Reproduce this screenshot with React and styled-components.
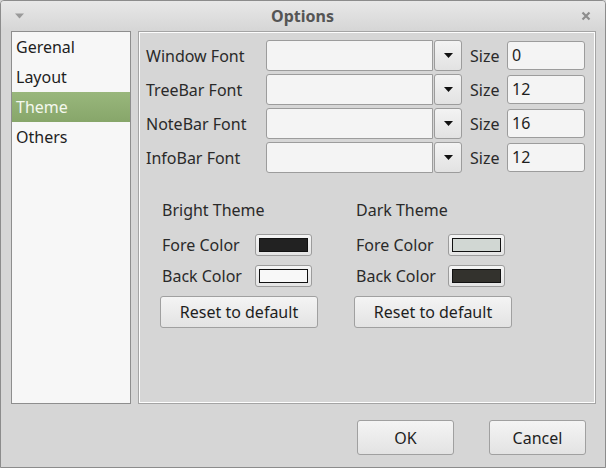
import React from 'react'
import styled, { createGlobalStyle } from 'styled-components'

const GlobalStyle = createGlobalStyle`
  html, body { margin: 0; padding: 0; background: #d6d6d6; }
  body { font-family: "Noto Sans", "Open Sans", sans-serif; font-size: 16px; color: #2a2a2a; }
  * { box-sizing: border-box; }
`

const Window = styled.div`
  width: 606px;
  height: 468px;
  border: 1px solid #8c8c8c;
  border-radius: 4px 4px 0 0;
  background: #d6d6d6;
  display: flex;
  flex-direction: column;
  overflow: hidden;
`

const TitleBar = styled.div`
  height: 29px;
  display: flex;
  align-items: center;
  justify-content: space-between;
  padding: 0 14px 0 14px;
  background: linear-gradient(#e8e8e8, #d6d6d6);
`

const Title = styled.div`
  font-weight: 700;
  font-size: 16px;
  color: #555;
  margin-top: 1px;
`

const Body = styled.div`
  display: flex;
  gap: 7px;
  padding: 1px 9px 0 10px;
  height: 374px;
`

const List = styled.div`
  width: 120px;
  background: #f7f7f7;
  border: 1px solid #8e8e8e;
`

const ListItem = styled.div`
  height: 30px;
  line-height: 30px;
  padding-left: 4px;
  color: ${p => (p.active ? '#f4f8ee' : '#1e1e1e')};
  background: ${p => (p.active ? 'linear-gradient(#99b77c, #87a66a)' : 'transparent')};
`

const Panel = styled.div`
  flex: 1;
  border: 1px solid #a4a4a4;
  box-shadow: inset -1px -1px 0 #fdfdfd, inset 1px 1px 0 #fdfdfd;
  padding: 8px 10px 0 7px;
  height: 373px;
`

const FontGrid = styled.div`
  display: grid;
  grid-template-columns: 120px 167px 29px 45px 78px;
  row-gap: 3px;
  align-items: center;
`

const Label = styled.div`
  white-space: nowrap;
  line-height: 20px;
`

const Field = styled.div`
  height: 31px;
  background: #f4f4f4;
  border: 1px solid #9c9c9c;
  border-radius: 3px 0 0 3px;
`

const DropButton = styled.div`
  height: 31px;
  margin-left: 1px;
  border: 1px solid #9c9c9c;
  border-radius: 3px;
  background: linear-gradient(#f3f3f3, #e2e2e2);
  display: flex;
  align-items: center;
  justify-content: center;
`

const SizeLabel = styled.div`
  padding-left: 8px;
  line-height: 20px;
`

const SizeInput = styled.div`
  height: 29px;
  background: #f4f4f4;
  border: 1px solid #9c9c9c;
  border-radius: 3px;
  padding-left: 4px;
  line-height: 27px;
  color: #1e1e1e;
`

const Themes = styled.div`
  display: flex;
  margin-top: 26px;
  padding-left: 16px;
`

const ThemeCol = styled.div`
  width: 194px;
  display: flex;
  flex-direction: column;
`

const ThemeTitle = styled.div`
  line-height: 22px;
  margin-bottom: 13px;
`

const ColorRow = styled.div`
  display: flex;
  align-items: center;
  height: 22px;
  margin-bottom: ${p => p.mb}px;
`

const ColorLabel = styled.div`
  width: ${p => p.w}px;
`

const ColorButton = styled.div`
  width: 57px;
  height: 22px;
  border: 1px solid #9c9c9c;
  border-radius: 3px;
  background: linear-gradient(#f5f5f5, #e4e4e4);
  padding: 3px 3px 3px 3px;
`

const Swatch = styled.div`
  width: 100%;
  height: 100%;
  border: 1px solid #111;
  background: ${p => p.color};
`

const Button = styled.div`
  width: ${p => p.w}px;
  height: ${p => p.h}px;
  border: 1px solid #a0a0a0;
  border-radius: 3px;
  background: linear-gradient(#f4f4f4, #e3e3e3);
  display: flex;
  align-items: center;
  justify-content: center;
  color: #1e1e1e;
  margin-left: ${p => p.ml || 0}px;
`

const Footer = styled.div`
  flex: 1;
  display: flex;
  justify-content: flex-end;
  gap: 35px;
  padding: 16px 19px 0 0;
`

const Arrow = ({ color = '#111', w = 9, h = 5 }) => (
  <svg width={w} height={h} viewBox="0 0 9 5">
    <polygon points="0,0 9,0 4.5,5" fill={color} />
  </svg>
)

const Close = () => (
  <svg width="10" height="10" viewBox="0 0 10 10">
    <path d="M1.5 1.5 L8.5 8.5 M8.5 1.5 L1.5 8.5" stroke="#8d8d8d" strokeWidth="2.2" />
  </svg>
)

const fonts = [
  ['Window Font', '0'],
  ['TreeBar Font', '12'],
  ['NoteBar Font', '16'],
  ['InfoBar Font', '12'],
]

const ThemeBlock = ({ title, fore, back, lw }) => (
  <ThemeCol>
    <ThemeTitle>{title}</ThemeTitle>
    <ColorRow mb={9}>
      <ColorLabel w={lw}>Fore Color</ColorLabel>
      <ColorButton><Swatch color={fore} /></ColorButton>
    </ColorRow>
    <ColorRow mb={9}>
      <ColorLabel w={lw}>Back Color</ColorLabel>
      <ColorButton><Swatch color={back} /></ColorButton>
    </ColorRow>
    <Button w={158} h={32} ml={-2}>Reset to default</Button>
  </ThemeCol>
)

const App = () => {
  return (
    <>
      <GlobalStyle />
      <Window>
        <TitleBar>
          <Arrow color="#9a9a9a" w={9} h={6} />
          <Title>Options</Title>
          <Close />
        </TitleBar>
        <Body>
          <List>
            <ListItem>Gerenal</ListItem>
            <ListItem>Layout</ListItem>
            <ListItem active>Theme</ListItem>
            <ListItem>Others</ListItem>
          </List>
          <Panel>
            <FontGrid>
              {fonts.map(([name, size]) => (
                <React.Fragment key={name}>
                  <Label>{name}</Label>
                  <Field />
                  <DropButton><Arrow /></DropButton>
                  <SizeLabel>Size</SizeLabel>
                  <SizeInput>{size}</SizeInput>
                </React.Fragment>
              ))}
            </FontGrid>
            <Themes>
              <ThemeBlock title="Bright Theme" fore="#222222" back="#f8f8f8" lw={93} />
              <ThemeBlock title="Dark Theme" fore="#d1d7d3" back="#33322d" lw={92} />
            </Themes>
          </Panel>
        </Body>
        <Footer>
          <Button w={97} h={35}>OK</Button>
          <Button w={97} h={35}>Cancel</Button>
        </Footer>
      </Window>
    </>
  )
}

export default App
